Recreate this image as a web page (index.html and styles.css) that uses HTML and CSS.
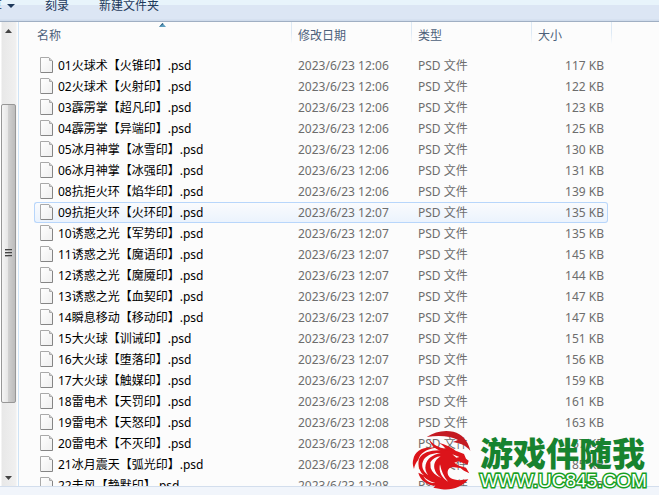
FILE: index.html
```html
<!DOCTYPE html>
<html lang="zh-CN">
<head>
    <meta charset="UTF-8">
    <meta name="viewport" content="width=device-width, initial-scale=1.0">
    <title>文件列表</title>
    <link rel="stylesheet" href="styles.css">
</head>
<body>
    <svg class="defs" width="0" height="0" aria-hidden="true">
        <linearGradient id="paper" x1="0" y1="0" x2="1" y2="1">
            <stop offset="0" stop-color="#ffffff"/>
            <stop offset="1" stop-color="#eeeeee"/>
        </linearGradient>
        <symbol id="file" viewBox="0 0 13 16">
            <path d="M.5.5h8.5l3.5 3.5v11.5H.5z" fill="url(#paper)"/>
            <path d="M.5 15V.5H9l3.5 3.5" fill="none" stroke="#a9a9a9"/>
            <path d="M12.5 4v11.5H.5" fill="none" stroke="#858585"/>
            <path d="M9.500 1v2.500h2.500" fill="none" stroke="#a9a9a9"/>
        </symbol>
    </svg>

    <!-- Toolbar -->
    <div class="toolbar">
        <button class="share">共享
            <svg width="8" height="4" viewBox="0 0 8 4"><path d="M0 0h8L4 4z" fill="#1e395b"/></svg>
        </button>
        <button>刻录</button>
        <button>新建文件夹</button>
    </div>

    <div class="main">
        <!-- Navigation pane scrollbar -->
        <div class="scrollbar">
            <button class="arrow" aria-label="向上滚动">
                <svg width="7" height="4" viewBox="0 0 7 4"><path d="M0 4h7L3.500 0z" fill="#444"/></svg>
            </button>
            <div class="track">
                <div class="thumb">
                    <svg width="7" height="9" viewBox="0 0 7 9"><path d="M0 .5h7M0 3.500h7M0 6.500h7" stroke="#444"/><path d="M0 1.500h7M0 4.500h7M0 7.500h7" stroke="#aaa"/></svg>
                </div>
            </div>
            <button class="arrow" aria-label="向下滚动">
                <svg width="7" height="4" viewBox="0 0 7 4"><path d="M0 0h7L3.500 4z" fill="#444"/></svg>
            </button>
        </div>

        <!-- File list -->
        <div class="list">
            <table>
                <colgroup>
                    <col class="col-name"><col class="col-date"><col class="col-type"><col class="col-size"><col>
                </colgroup>
                <thead>
                    <tr>
                        <th class="name">名称
                            <svg class="sort" width="7" height="4" viewBox="0 0 7 4"><path d="M0 4h7L3.500 0z" fill="#5f9fc0"/><path d="M0 4L3.500 0l1 1z" fill="#2f5f80"/></svg>
                        </th>
                        <th>修改日期</th>
                        <th>类型</th>
                        <th>大小</th>
                        <td class="end"></td>
                    </tr>
                </thead>
                <tbody id="files"></tbody>
            </table>
        </div>
    </div>

    <div class="details"></div>

    <!-- Watermark -->
    <div class="watermark">
        <svg class="dragon" width="60" height="60" viewBox="12 15 180 180">
            <path fill="#c41a22" d="M56 36C80 20 108 14 136 20C162 27 180 46 187 77C172 61 158 54 134 51L150 45C128 33 94 30 56 36z"/>
            <!-- Horn -->
            <path fill="#dc141a" d="M63 43C76 60 92 68 114 72C106 62 98 56 92 53C112 58 132 67 147 80L122 84C94 80 70 68 63 43z"/>
            <!-- Outer wing -->
            <path fill="#dc141a" d="M16 103C20 78 43 64 82 68C54 73 36 84 31 104C24 112 20 120 18 132C13 118 14 110 16 103z"/>
            <!-- Head and body -->
            <path fill="#dc141a" d="M34 100C44 82 68 74 104 76L147 79L168 87L174 101L182 107L179 119L163 113L151 109L139 113L153 122L174 128L184 145L168 137L157 129L139 127C125 125 118 133 119 145C121 161 140 170 181 163C164 185 132 197 102 193L76 188L82 182C58 181 36 166 31 143L48 151C32 138 28 118 34 100z"/>
            <path fill="#fcfcfc" d="M47 104C58 89 76 83 98 84C72 90 58 100 53 119C50 132 54 142 61 151C48 142 41 131 43 115zM67 112C75 101 84 95 98 94C83 103 77 114 79 130C81 142 89 152 100 159C83 152 72 142 68 129zM46 154C57 165 68 171 82 174C68 176 54 169 46 154zM133 88L154 96L145 98zM96 118C91 139 101 159 120 170C106 154 100 137 96 118z"/>
        </svg>
        <div class="brand">
            <div class="brand-name">游戏伴随我</div>
            <div class="brand-url">WWW.UC845.COM</div>
        </div>
    </div>

    <script>
        const files = [
            ['01火球术【火锥印】', '12:06', 117],
            ['02火球术【火射印】', '12:06', 122],
            ['03霹雳掌【超凡印】', '12:06', 123],
            ['04霹雳掌【异端印】', '12:06', 125],
            ['05冰月神掌【冰雪印】', '12:06', 130],
            ['06冰月神掌【冰强印】', '12:06', 131],
            ['08抗拒火环【焰华印】', '12:06', 139],
            ['09抗拒火环【火环印】', '12:07', 135],
            ['10诱惑之光【军势印】', '12:07', 135],
            ['11诱惑之光【魔语印】', '12:07', 145],
            ['12诱惑之光【魔魇印】', '12:07', 144],
            ['13诱惑之光【血契印】', '12:07', 147],
            ['14瞬息移动【移动印】', '12:07', 147],
            ['15大火球【训诫印】', '12:07', 151],
            ['16大火球【堕落印】', '12:07', 156],
            ['17大火球【触媒印】', '12:07', 159],
            ['18雷电术【天罚印】', '12:08', 161],
            ['19雷电术【天怒印】', '12:08', 163],
            ['20雷电术【不灭印】', '12:08', 167],
            ['21冰月震天【弧光印】', '12:08', 185],
            ['22击风【静默印】', '12:08', 180]
        ];
        const selected = 7;

        document.getElementById('files').innerHTML = files.map(([name, time, size], i) => `
            <tr class="${i === selected ? 'selected' : ''}">
                <td class="name"><div class="file"><svg width="13" height="16"><use href="#file"/></svg>${name}.psd</div></td>
                <td>2023/6/23 ${time}</td>
                <td>PSD 文件</td>
                <td class="size">${size} KB</td>
            </tr>
        `).join('');
    </script>
</body>
</html>
```

FILE: styles.css
```css
* {
    box-sizing: border-box;
}
body {
    margin: 0;
    height: 100vh;
    display: flex;
    flex-direction: column;
    overflow: hidden;
    background: #fcfcfc;
    font-family: "Noto Sans", "Noto Sans CJK SC", sans-serif;
    font-size: 12px;
    line-height: 18px;
    color: #6d6d6d;
}
button {
    padding: 0;
    border: none;
    background: none;
    font: inherit;
    color: inherit;
}
.defs {
    position: absolute;
}

/* Toolbar */
.toolbar {
    flex: none;
    display: flex;
    align-items: flex-start;
    gap: 30px;
    height: 22px;
    overflow: hidden;
    background: linear-gradient(#e8f4fb 5px, #dce6f4 5px, #dce6f4 19px, #d0dcec 20px);
    border-bottom: 1px solid #a0afc3;
    color: #1e395b;
}
.toolbar button {
    flex: none;
    line-height: 12px;
}
.toolbar .share {
    display: flex;
    align-items: center;
    gap: 5px;
    margin-left: -22px;
}

.main {
    flex: 1;
    display: flex;
    min-height: 0;
}

/* Scrollbar */
.scrollbar {
    flex: none;
    display: flex;
    flex-direction: column;
    width: 19px;
    padding: 0 2px 0 1px;
    background: linear-gradient(to right, #fff 1px, #e8e8e8 2px, #f0f0f0 16px, #fcfcfc 17px);
    border-right: 1px solid #cfe3f5;
}
.arrow {
    display: flex;
    align-items: center;
    justify-content: center;
    height: 17px;
}
.track {
    flex: 1;
    padding-top: 65px;
}
.thumb {
    display: flex;
    align-items: center;
    justify-content: center;
    height: 82%;
    width: 15px;
    border: 1px solid #979797;
    border-radius: 2px;
    background: linear-gradient(to right, #f5f5f5, #e6e6e6 45%, #d0d0d0 50%, #bcbcbc);
}

/* File list */
.list {
    flex: 1;
    overflow: hidden;
    padding-left: 15px;
}
table {
    width: 100%;
    table-layout: fixed;
    border-collapse: separate;
    border-spacing: 0;
}
.col-name {
    width: 257px;
}
.col-date, .col-type {
    width: 120px;
}
.col-size {
    width: 77px;
}
th {
    position: relative;
    height: 33px;
    padding: 5px 7px 0;
    vertical-align: top;
    text-align: left;
    font-weight: normal;
    color: #4c607a;
    background: linear-gradient(#dde9f5 50%, #fcfcfc) left top / 1px 22px no-repeat;
}
th.name {
    padding-left: 3px;
    background: none;
}
.end {
    background: linear-gradient(#dde9f5 50%, #fcfcfc) 3px 0 / 1px 22px no-repeat;
}
.sort {
    position: absolute;
    top: 1px;
    left: 50%;
    margin-left: -4px;
}
tbody td {
    height: 21px;
    padding: 0 7px;
    border: 1px solid transparent;
    border-width: 1px 0;
    line-height: 19px;
    white-space: nowrap;
}
tbody .name {
    padding-left: 5px;
    border-left-width: 1px;
    color: #000;
}
tbody .size {
    padding-right: 3px;
    border-right-width: 1px;
    text-align: right;
}
.file {
    display: flex;
    align-items: flex-start;
    gap: 5px;
}
.file svg {
    flex: none;
    margin-top: 1px;
}
.selected td {
    border-color: #b8d6fb;
    background: linear-gradient(#fafbfd, #ebf3fd);
}
.selected .name {
    border-radius: 3px 0 0 3px;
}
.selected .size {
    border-radius: 0 3px 3px 0;
}

/* Details pane */
.details {
    flex: none;
    height: 9px;
    background: #f1f5fb;
    border-top: 1px solid #d3deed;
}

/* Watermark */
.watermark {
    position: absolute;
    right: 11px;
    bottom: 5px;
    display: flex;
    align-items: flex-end;
    gap: 8px;
}
.brand {
    width: 168px;
    white-space: nowrap;
}
.brand-name {
    font-size: 33px;
    font-weight: 900;
    line-height: 36px;
    color: #17832f;
}
.brand-url {
    font-family: "Liberation Sans", Arial, sans-serif;
    font-size: 19px;
    line-height: 18px;
    color: #fff;
    -webkit-text-stroke: 3px #18a022;
    paint-order: stroke fill;
}
```
